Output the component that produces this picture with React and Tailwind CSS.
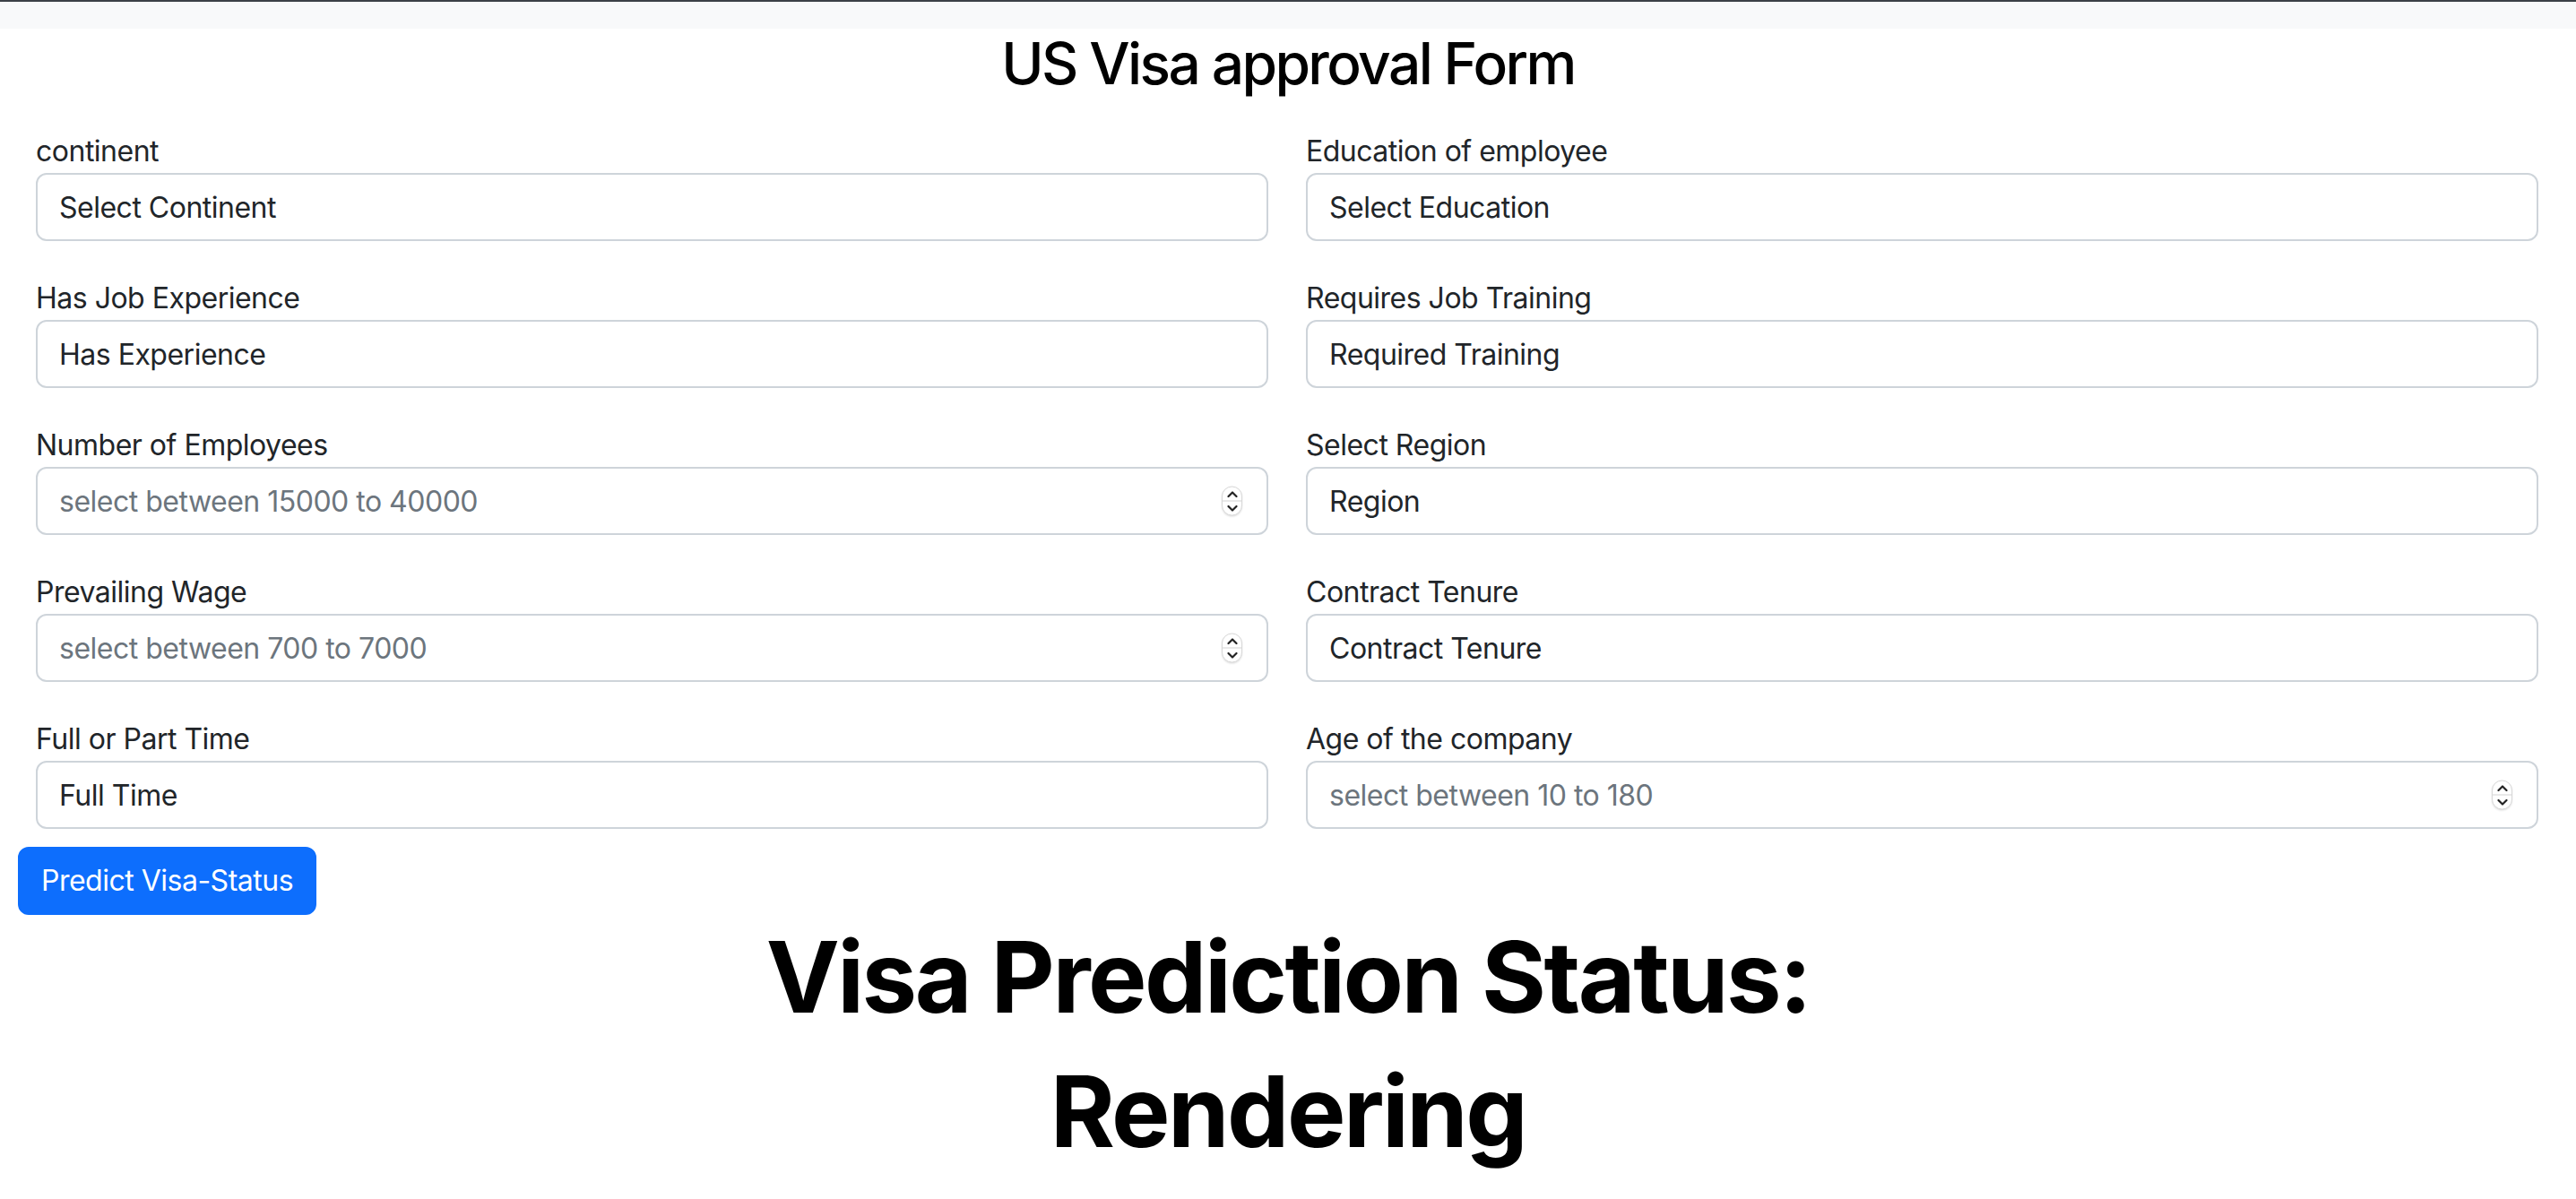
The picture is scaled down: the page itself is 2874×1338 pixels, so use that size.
import React from "react";

const fields = [
  { label: "continent", value: "Select Continent" },
  { label: "Education of employee", value: "Select Education" },
  { label: "Has Job Experience", value: "Has Experience" },
  { label: "Requires Job Training", value: "Required Training" },
  { label: "Number of Employees", placeholder: "select between 15000 to 40000", spin: true },
  { label: "Select Region", value: "Region" },
  { label: "Prevailing Wage", placeholder: "select between 700 to 7000", spin: true },
  { label: "Contract Tenure", value: "Contract Tenure" },
  { label: "Full or Part Time", value: "Full Time" },
  { label: "Age of the company", placeholder: "select between 10 to 180", spin: true },
];

// native-looking number stepper (macOS style)
function Spinner() {
  return (
    <div className="absolute right-[29px] top-1/2 -translate-y-1/2 w-[23px] h-[33px] rounded-full border border-[#d8d8d8] bg-white shadow-[0_1px_2px_rgba(0,0,0,0.12)] flex flex-col overflow-hidden">
      <div className="flex-1 flex items-center justify-center">
        <svg width="12" height="8" viewBox="0 0 12 8" fill="none">
          <path d="M1.5 6.5 L6 2 L10.5 6.5" stroke="#222" strokeWidth="2.2" strokeLinecap="round" strokeLinejoin="round" />
        </svg>
      </div>
      <div className="h-px bg-[#d4d4d4]" />
      <div className="flex-1 flex items-center justify-center">
        <svg width="12" height="8" viewBox="0 0 12 8" fill="none">
          <path d="M1.5 1.5 L6 6 L10.5 1.5" stroke="#222" strokeWidth="2.2" strokeLinecap="round" strokeLinejoin="round" />
        </svg>
      </div>
    </div>
  );
}

function Field({ label, value, placeholder, spin }) {
  return (
    <div className="flex flex-col">
      <label className="text-[32px] leading-[48px] tracking-[-0.5px] text-[#212529]">{label}</label>
      <div className="relative">
        <input
          readOnly
          value={value ?? ""}
          placeholder={placeholder}
          className="block w-full h-[76px] rounded-[12px] border-2 border-[#ced4da] bg-white px-[24px] text-[32px] tracking-[-0.5px] text-[#212529] placeholder:text-[#6c757d] outline-none"
        />
        {spin && <Spinner />}
      </div>
    </div>
  );
}

export default function App() {
  return (
    <div className="min-h-screen bg-white font-[Inter,sans-serif] text-[#212529]">
      {/* ── top bar ── */}
      <div className="h-[32px] bg-[#f8f9fa] border-t-2 border-[#3b4046]" />

      <h2 className="text-center text-[64px] leading-[77px] tracking-[-2.6px] font-medium text-black">
        US Visa approval Form
      </h2>

      {/* ── form grid ── */}
      <div className="mt-[36px] grid grid-cols-2 gap-x-[42px] gap-y-[40px] pl-[40px] pr-[42px]">
        {fields.map((f) => (
          <Field key={f.label} {...f} />
        ))}
      </div>

      <div className="mt-[20px] pl-[20px]">
        <button className="h-[76px] rounded-[12px] border-2 border-[#0d6efd] bg-[#0d6efd] px-[24px] text-[32px] leading-[48px] tracking-[-0.5px] text-white">
          Predict Visa-Status
        </button>
      </div>

      {/* ── result ── */}
      <h1 className="-mt-[6px] text-center text-[110px] leading-[150px] tracking-[-2.5px] font-bold text-black">
        Visa Prediction Status:
        <br />
        Rendering
      </h1>
    </div>
  );
}
